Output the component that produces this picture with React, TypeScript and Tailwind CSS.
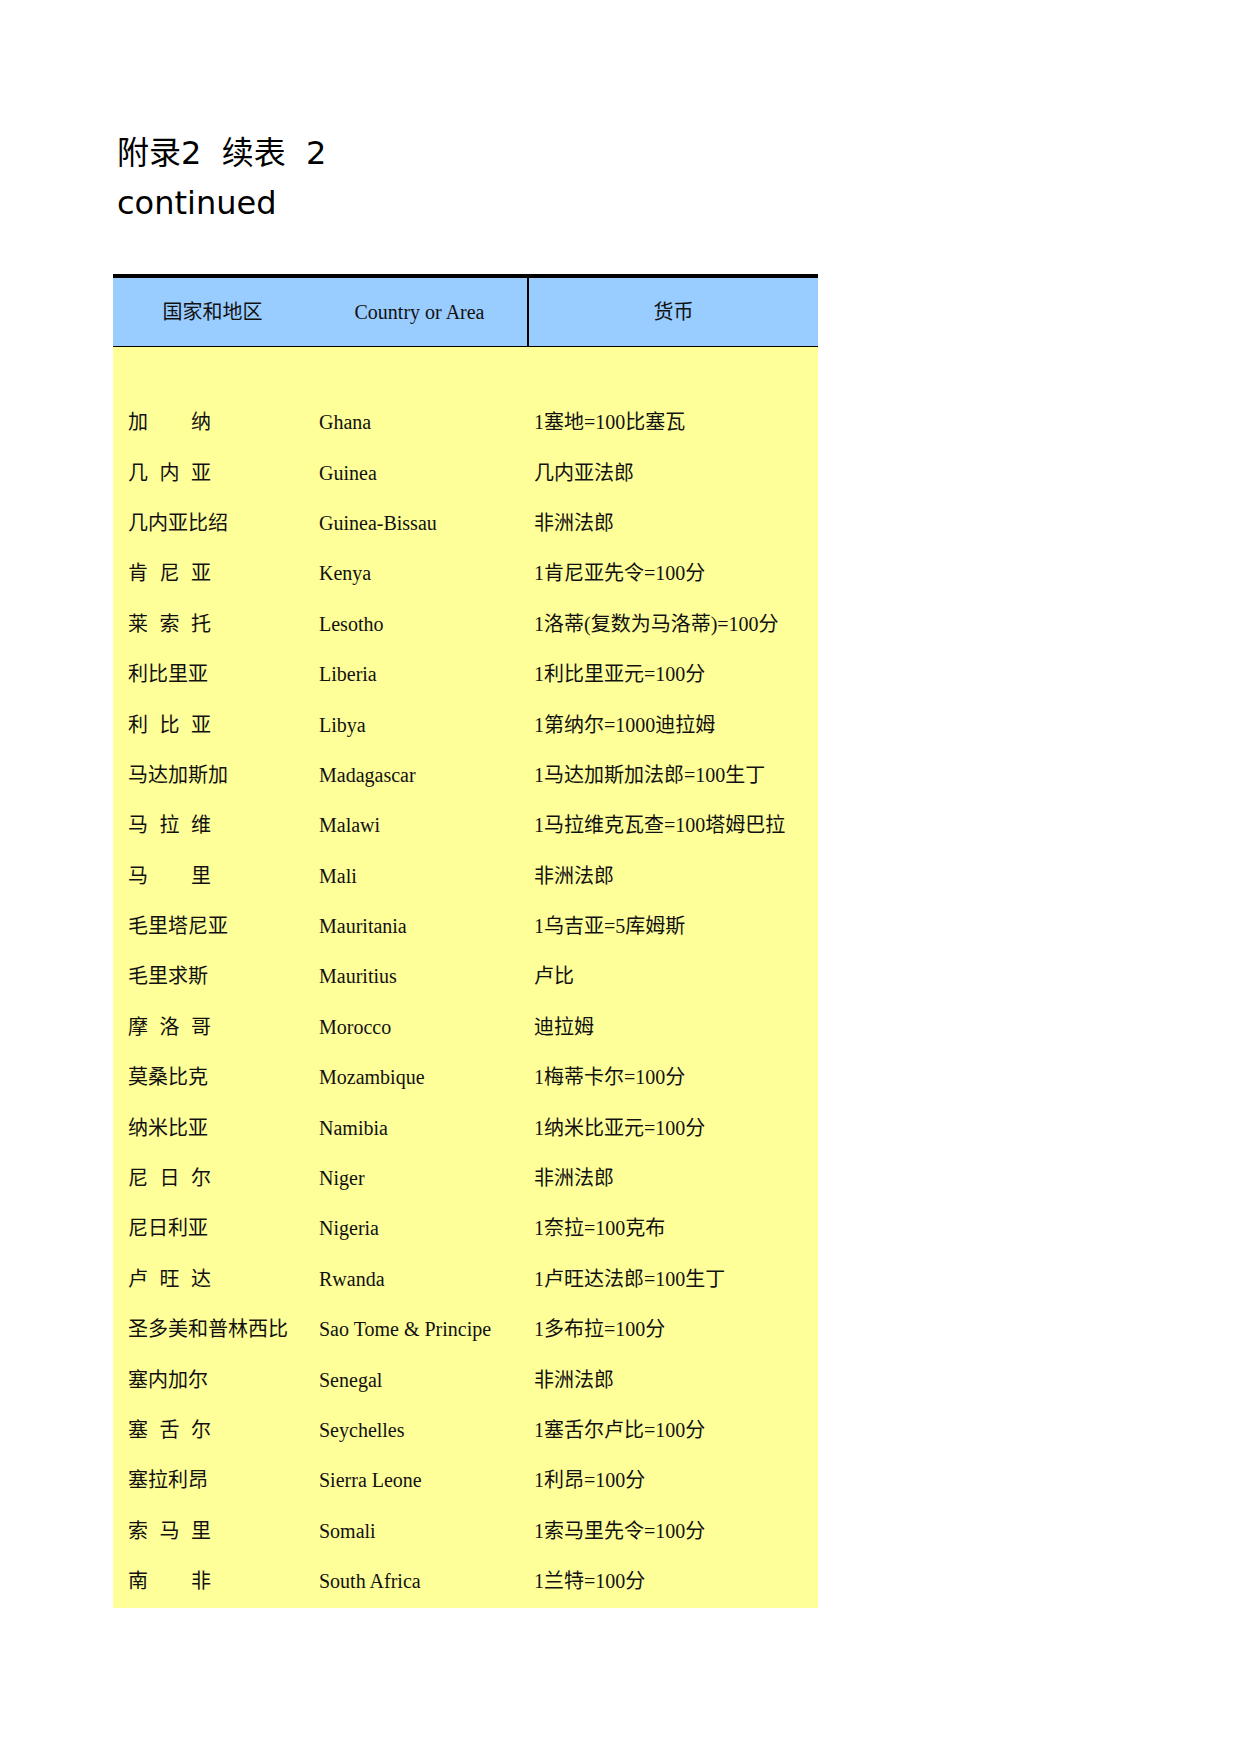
const rows: [string, string, string, boolean][] = [
  ["加纳", "Ghana", "1塞地=100比塞瓦", true],
  ["几内亚", "Guinea", "几内亚法郎", true],
  ["几内亚比绍", "Guinea-Bissau", "非洲法郎", false],
  ["肯尼亚", "Kenya", "1肯尼亚先令=100分", true],
  ["莱索托", "Lesotho", "1洛蒂(复数为马洛蒂)=100分", true],
  ["利比里亚", "Liberia", "1利比里亚元=100分", false],
  ["利比亚", "Libya", "1第纳尔=1000迪拉姆", true],
  ["马达加斯加", "Madagascar", "1马达加斯加法郎=100生丁", false],
  ["马拉维", "Malawi", "1马拉维克瓦查=100塔姆巴拉", true],
  ["马里", "Mali", "非洲法郎", true],
  ["毛里塔尼亚", "Mauritania", "1乌吉亚=5库姆斯", false],
  ["毛里求斯", "Mauritius", "卢比", false],
  ["摩洛哥", "Morocco", "迪拉姆", true],
  ["莫桑比克", "Mozambique", "1梅蒂卡尔=100分", false],
  ["纳米比亚", "Namibia", "1纳米比亚元=100分", false],
  ["尼日尔", "Niger", "非洲法郎", true],
  ["尼日利亚", "Nigeria", "1奈拉=100克布", false],
  ["卢旺达", "Rwanda", "1卢旺达法郎=100生丁", true],
  ["圣多美和普林西比", "Sao Tome & Principe", "1多布拉=100分", false],
  ["塞内加尔", "Senegal", "非洲法郎", false],
  ["塞舌尔", "Seychelles", "1塞舌尔卢比=100分", true],
  ["塞拉利昂", "Sierra Leone", "1利昂=100分", false],
  ["索马里", "Somali", "1索马里先令=100分", true],
  ["南非", "South Africa", "1兰特=100分", true],
];

export default function App() {
  const serif = { fontFamily: '"Liberation Serif", "Noto Sans CJK SC", serif' };
  return (
    <div className="w-[1240px] h-[1754px] bg-white relative">
      <div className="pt-[128px] pl-[117px] text-[32px] leading-[50px] text-black" style={{ fontFamily: '"DejaVu Sans", "Noto Sans CJK SC", sans-serif' }}>
        <div>附录2&nbsp;&nbsp;续表&nbsp;&nbsp;2</div>
        <div>continued</div>
      </div>
      <div className="ml-[113px] mt-[46px] w-[705px] text-[20px] text-[#111]" style={serif}>
        <div className="h-[4px] bg-black" />
        <div className="flex h-[69px] bg-[#99ccff] border-b border-black">
          <div className="w-[416px] flex items-center border-r-2 border-black">
            <div className="w-[200px] text-center">国家和地区</div>
            <div className="w-[216px] text-center">Country or Area</div>
          </div>
          <div className="flex-1 flex items-center justify-center">货币</div>
        </div>
        <div className="bg-[#ffff99] pt-[50px] pb-[2px]">
          {rows.map(([zh, en, cur, sp]) => (
            <div key={en} className="flex h-[50.4px] items-center">
              <div className="w-[206px] pl-[15px]">
                {sp ? (
                  <div className="w-[83px] flex justify-between">
                    {zh.split("").map((c, i) => <span key={i}>{c}</span>)}
                  </div>
                ) : (
                  zh
                )}
              </div>
              <div className="w-[215px]">{en}</div>
              <div className="flex-1 whitespace-nowrap">{cur}</div>
            </div>
          ))}
        </div>
      </div>
    </div>
  );
}
